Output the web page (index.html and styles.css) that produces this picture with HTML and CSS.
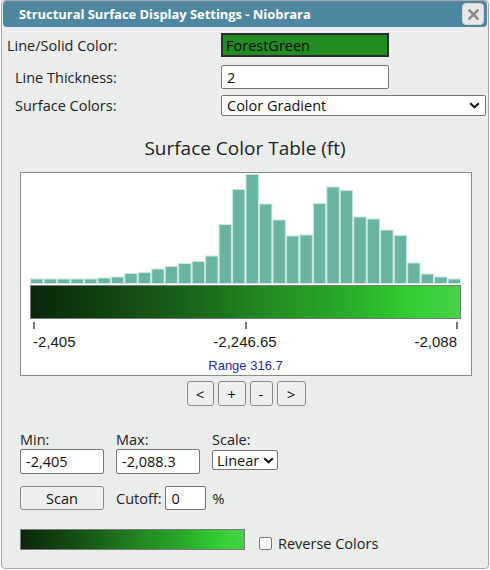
FILE: index.html
```html
<!DOCTYPE html>
<html>
<head>
<meta charset="utf-8">
<link rel="stylesheet" href="styles.css">
</head>
<body>
<div class="dialog">
  <div class="titlebar">
    <span class="title">Structural Surface Display Settings - Niobrara</span>
    <button class="close" aria-label="close">
      <svg width="11" height="11" viewBox="0 0 11 11"><path d="M1.5 1.5 L9.5 9.5 M9.5 1.5 L1.5 9.5" stroke="#8c8c8c" stroke-width="2.6" stroke-linecap="square"/></svg>
    </button>
  </div>
  <div class="content">
    <div class="row row-first">
      <label class="lbl">Line/Solid Color:</label>
      <input class="field field-color" type="text" value="ForestGreen">
    </div>
    <div class="row row-second">
      <label class="lbl lbl-indent">Line Thickness:</label>
      <input class="field" type="text" value="2">
    </div>
    <div class="row row-third">
      <label class="lbl lbl-indent">Surface Colors:</label>
      <div class="select select-wide"><span>Color Gradient</span>
        <svg class="chev" width="11" height="7" viewBox="0 0 11 7"><path d="M1.2 1.2 L5.5 5.3 L9.8 1.2" fill="none" stroke="#111" stroke-width="2"/></svg>
      </div>
    </div>

    <div class="chart-title">Surface Color Table (ft)</div>

    <div class="chart">
      <svg class="hist" width="431" height="111" viewBox="0 0 431 111">
        <g fill="#69b4a2" stroke="#cbe7de" stroke-width="1">
          <rect x="0.5" y="106" width="12.4" height="4.5"/>
          <rect x="13.97" y="106" width="12.4" height="4.5"/>
          <rect x="27.44" y="106" width="12.4" height="4.5"/>
          <rect x="40.91" y="106" width="12.4" height="4.5"/>
          <rect x="54.38" y="106" width="12.4" height="4.5"/>
          <rect x="67.85" y="105" width="12.4" height="5.5"/>
          <rect x="81.32" y="104" width="12.4" height="6.5"/>
          <rect x="94.79" y="100.5" width="12.4" height="10"/>
          <rect x="108.26" y="99.5" width="12.4" height="11"/>
          <rect x="121.73" y="96" width="12.4" height="14.5"/>
          <rect x="135.2" y="93.5" width="12.4" height="17"/>
          <rect x="148.67" y="90.5" width="12.4" height="20"/>
          <rect x="162.14" y="88.5" width="12.4" height="22"/>
          <rect x="175.61" y="83" width="12.4" height="27.5"/>
          <rect x="189.08" y="51.5" width="12.4" height="59"/>
          <rect x="202.55" y="16.5" width="12.4" height="94"/>
          <rect x="216.02" y="1.5" width="12.4" height="109"/>
          <rect x="229.49" y="31" width="12.4" height="79.5"/>
          <rect x="242.96" y="47" width="12.4" height="63.5"/>
          <rect x="256.43" y="63" width="12.4" height="47.5"/>
          <rect x="269.9" y="62" width="12.4" height="48.5"/>
          <rect x="283.37" y="30.5" width="12.4" height="80"/>
          <rect x="296.84" y="14" width="12.4" height="96.5"/>
          <rect x="310.31" y="17.5" width="12.4" height="93"/>
          <rect x="323.78" y="44" width="12.4" height="66.5"/>
          <rect x="337.25" y="46" width="12.4" height="64.5"/>
          <rect x="350.72" y="57" width="12.4" height="53.5"/>
          <rect x="364.19" y="62.5" width="12.4" height="48"/>
          <rect x="377.66" y="90" width="12.4" height="20.5"/>
          <rect x="391.13" y="101" width="12.4" height="9.5"/>
          <rect x="404.6" y="104" width="12.4" height="6.5"/>
          <rect x="418.07" y="106" width="12.4" height="4.5"/>
        </g>
      </svg>
      <div class="gradient gradient-big"></div>
      <div class="ticks"><span class="tick"></span><span class="tick"></span><span class="tick"></span></div>
      <div class="tick-labels">
        <span class="tl tl-left">-2,405</span>
        <span class="tl tl-mid">-2,246.65</span>
        <span class="tl tl-right">-2,088</span>
      </div>
      <div class="range">Range 316.7</div>
    </div>

    <div class="nav">
      <button class="btn nav-btn nav-prev">&lt;</button>
      <button class="btn nav-btn nav-plus">+</button>
      <button class="btn nav-btn nav-minus">-</button>
      <button class="btn nav-btn nav-next">&gt;</button>
    </div>

    <div class="limits">
      <div class="col">
        <label class="lbl-small">Min:</label>
        <input class="field field-small" type="text" value="-2,405">
      </div>
      <div class="col">
        <label class="lbl-small">Max:</label>
        <input class="field field-small" type="text" value="-2,088.3">
      </div>
      <div class="col">
        <label class="lbl-small">Scale:</label>
        <div class="select select-scale"><span>Linear</span>
          <svg class="chev" width="11" height="7" viewBox="0 0 11 7"><path d="M1.2 1.2 L5.5 5.3 L9.8 1.2" fill="none" stroke="#111" stroke-width="2"/></svg>
        </div>
      </div>
    </div>

    <div class="scan-row">
      <button class="btn scan-btn">Scan</button>
      <label class="lbl-small cutoff-lbl">Cutoff:</label>
      <input class="field field-cutoff" type="text" value="0">
      <span class="pct">%</span>
    </div>

    <div class="bottom-row">
      <div class="gradient gradient-small"></div>
      <label class="reverse"><span class="checkbox"></span><span>Reverse Colors</span></label>
    </div>
  </div>
</div>
</body>
</html>
```
FILE: styles.css
```css
* { box-sizing: border-box; }
body {
  margin: 0;
  background: #ffffff;
  font-family: "Open Sans", "Noto Sans", sans-serif;
  color: #222;
}
.dialog {
  margin-left: 1px;
  width: 488px;
  height: 569px;
  border: 1px solid #a9a9a9;
  border-radius: 4px;
  background: #ebedec;
}
.titlebar {
  height: 26px;
  margin: 0 1px;
  background: #4e879f;
  border-radius: 4px;
  display: flex;
  align-items: center;
  justify-content: space-between;
  padding: 0 3px 0 16px;
}
.title {
  color: #fff;
  font-weight: bold;
  font-size: 13px;
  letter-spacing: -0.05px;
}
.close {
  width: 22px;
  height: 22px;
  padding: 0;
  border: 1px solid #d3d3d3;
  border-radius: 4px;
  background: #e8e8e8;
  display: flex;
  align-items: center;
  justify-content: center;
}
.content {
  padding: 6px 0 0 5px;
}
.row {
  display: grid;
  grid-template-columns: 214px auto;
  align-items: center;
  justify-content: start;
}
.row-second { margin-top: 8px; }
.row-third { margin-top: 6px; }
.lbl {
  font-size: 14.5px;
  color: #222;
}
.lbl-indent { padding-left: 8px; }
.field {
  width: 168px;
  height: 24px;
  border: 1px solid #767676;
  border-radius: 2px;
  background: #fff;
  padding: 0 5px;
  font-family: "Open Sans", "Noto Sans", sans-serif;
  font-size: 14.5px;
  color: #111;
}
.field-color {
  background: #228b22;
  border: 2px solid #2e2e2e;
  border-radius: 0;
  padding: 0 3px;
  color: #0e0e0e;
}
.select {
  height: 21px;
  border: 1px solid #767676;
  border-radius: 2px;
  background: #fff;
  display: flex;
  align-items: center;
  justify-content: space-between;
  padding: 0 5px 0 5px;
  font-size: 14.5px;
  color: #111;
}
.select-wide { width: 265px; }
.chev { display: block; }
.chart-title {
  margin-top: 20px;
  text-align: center;
  font-size: 19px;
  line-height: 24px;
  color: #222;
  padding-right: 5px;
}
.chart {
  margin: 12px 0 0 13px;
  width: 452px;
  height: 204px;
  border: 1px solid #8a8a8a;
  background: #fff;
  padding: 0 10px 0 9px;
}
.hist { display: block; }
.gradient {
  border: 1px solid #7a7a7a;
  background: linear-gradient(to right, #0b260b 0%, #134a13 22%, #1c6e1c 42%, #228b22 55%, #28a828 72%, #32cd32 88%, #47d247 100%);
}
.gradient-big {
  margin-top: 1px;
  height: 34px;
}
.ticks {
  margin-top: 3px;
  height: 7px;
  display: flex;
  justify-content: space-between;
  padding: 0 3px 0 3px;
}
.tick {
  width: 2px;
  height: 7px;
  background: #777;
}
.tick-labels {
  display: grid;
  grid-template-columns: 1fr auto 1fr;
  padding: 0 4px 0 3px;
  margin-top: 4px;
  font-family: "Liberation Sans", Arial, sans-serif;
  font-size: 15px;
  line-height: 17px;
  color: #1a1a1a;
}
.tl-left { text-align: left; }
.tl-mid { text-align: center; }
.tl-right { text-align: right; }
.range {
  margin-top: 8px;
  text-align: center;
  font-family: "Liberation Sans", Arial, sans-serif;
  font-size: 13px;
  line-height: 15px;
  color: #2a2a9e;
}
.nav {
  margin-top: 5px;
  display: flex;
  justify-content: center;
  gap: 4px;
  padding-right: 3px;
}
.btn {
  height: 25px;
  border: 1px solid #8a8a8a;
  border-radius: 3px;
  background: #efefef;
  font-family: "Open Sans", "Noto Sans", sans-serif;
  font-size: 15px;
  color: #111;
  padding: 0;
}
.nav-prev { width: 27px; }
.nav-plus { width: 28px; }
.nav-minus { width: 23px; }
.nav-next { width: 29px; }
.limits {
  margin: 24px 0 0 13px;
  display: flex;
  gap: 12px;
  align-items: flex-start;
}
.col {
  display: flex;
  flex-direction: column;
}
.lbl-small {
  font-size: 14.5px;
  line-height: 19px;
  color: #222;
}
.field-small {
  width: 84px;
  height: 25px;
}
.select-scale {
  width: 66px;
  height: 20px;
  margin-top: 1px;
  padding: 0 3px 0 4px;
}
.scan-row {
  margin: 12px 0 0 13px;
  display: flex;
  align-items: center;
}
.scan-btn {
  width: 84px;
  height: 24px;
  font-size: 14.5px;
}
.cutoff-lbl { margin-left: 12px; }
.field-cutoff {
  margin-left: 4px;
  width: 41px;
  height: 24px;
}
.pct {
  margin-left: 6px;
  font-size: 14.5px;
}
.bottom-row {
  margin: 19px 0 0 13px;
  display: flex;
  align-items: flex-start;
}
.gradient-small {
  width: 225px;
  height: 21px;
}
.reverse {
  margin: 5px 0 0 14px;
  display: flex;
  align-items: center;
  font-size: 14.5px;
  color: #222;
}
.checkbox {
  width: 13px;
  height: 13px;
  border: 1px solid #767676;
  border-radius: 2px;
  background: #fff;
  margin-right: 6px;
}
```
